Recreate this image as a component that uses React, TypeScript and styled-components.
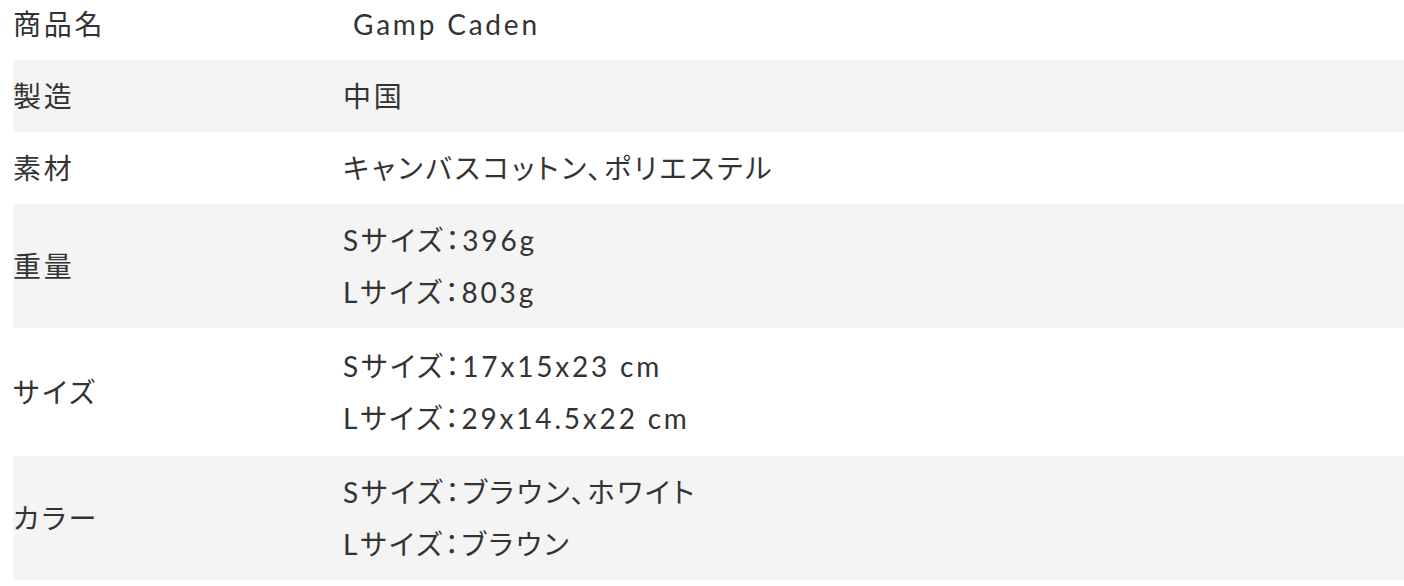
import React from 'react';
import styled, { createGlobalStyle } from 'styled-components';

const GlobalStyle = createGlobalStyle`
    html, body {
        margin: 0;
        padding: 0;
        background: #fff;
    }
    body {
        font-family: 'Lato', 'Noto Sans CJK JP', sans-serif;
        color: #333;
    }
`;

const Wrapper = styled.div`
    padding-left: 13px;
    margin-top: -12px;
`;

const SpecTable = styled.table`
    width: 100%;
    border-collapse: collapse;
    font-size: 28px;
    letter-spacing: 0.1em;
    line-height: 52px;
    font-feature-settings: 'palt';
`;

const Row = styled.tr<{ $shaded?: boolean }>`
    background: ${(p) => (p.$shaded ? '#f4f4f4' : '#fff')};
`;

const Label = styled.th`
    width: 330px;
    padding: 10px 0;
    text-align: left;
    font-weight: 400;
    vertical-align: middle;
`;

const Value = styled.td<{ $extra?: number }>`
    padding: ${(p) => 10 + (p.$extra ?? 0)}px 0;
    vertical-align: middle;
`;

const Line = styled.div`
    white-space: pre;
`;

const specs: { label: string; lines: string[]; extra?: number }[] = [
    { label: '商品名', lines: ['\u00a0Gamp Caden'] },
    { label: '製造', lines: ['中国'] },
    { label: '素材', lines: ['キャンバスコットン、ポリエステル'] },
    { label: '重量', lines: ['Sサイズ：396g', 'Lサイズ：803g'] },
    { label: 'サイズ', lines: ['Sサイズ：17x15x23 cm', 'Lサイズ：29x14.5x22 cm'], extra: 2 },
    { label: 'カラー', lines: ['Sサイズ：ブラウン、ホワイト', 'Lサイズ：ブラウン'] },
];

export default function App() {
    return (
        <>
            <GlobalStyle />
            <Wrapper>
                <SpecTable>
                    <tbody>
                        {specs.map((s, i) => (
                            <Row key={s.label} $shaded={i % 2 === 1}>
                                <Label>{s.label}</Label>
                                <Value $extra={s.extra}>
                                    {s.lines.map((l) => (
                                        <Line key={l}>{l}</Line>
                                    ))}
                                </Value>
                            </Row>
                        ))}
                    </tbody>
                </SpecTable>
            </Wrapper>
        </>
    );
}
